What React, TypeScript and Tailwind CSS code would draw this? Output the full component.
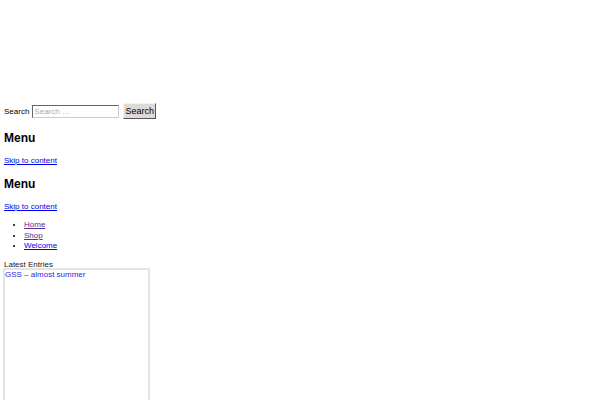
export default function App() {
  return (
    <div className="min-h-[400px] bg-white px-[4px] pt-[103px] text-[8px] text-black font-['Liberation_Sans',Arial,sans-serif]">
      <form className="flex h-[16px] items-center">
        <label className="mt-[1px] leading-[10px]">Search</label>
        <input
          type="search"
          placeholder="Search …"
          className="ml-[3px] h-[13px] w-[87px] border border-t-[#666] border-l-[#666] border-r-[#ccc] border-b-[#ccc] bg-white px-[1px] text-[8px] leading-[10px] placeholder:text-[#aaa] outline-none"
        />
        <button
          type="button"
          className="ml-[4px] h-[16px] w-[33px] border border-t-[#f4f4f4] border-l-[#f4f4f4] border-r-[#555] border-b-[#555] bg-[#dedbd6] p-0 text-[9px] leading-[10px]"
        >
          Search
        </button>
      </form>

      <h2 className="mt-[12px] text-[12px] font-bold leading-[14px]">Menu</h2>
      <p className="mt-[11px] leading-[10px]">
        <a href="#" className="text-[#0000ee] underline">Skip to content</a>
      </p>

      <h2 className="mt-[11px] text-[12px] font-bold leading-[14px]">Menu</h2>
      <p className="mt-[11px] leading-[10px]">
        <a href="#" className="text-[#0000ee] underline">Skip to content</a>
      </p>

      <ul className="mt-[8px] list-disc pl-[20px] leading-[10.5px]">
        <li><a href="#" className="text-[#5a2a96] underline">Home</a></li>
        <li><a href="#" className="text-[#5a2a96] underline">Shop</a></li>
        <li><a href="#" className="text-[#0000ee] underline">Welcome</a></li>
      </ul>

      <div className="mt-[8px] leading-[9px] text-[#222]">Latest Entries</div>
      <div className="-mt-[1px] -ml-[1px] h-[150px] w-[147px] border-2 border-[#e4e4e4] leading-[10px] text-[#2a2ae0]">
        GSS – almost summer
      </div>
    </div>
  );
}
